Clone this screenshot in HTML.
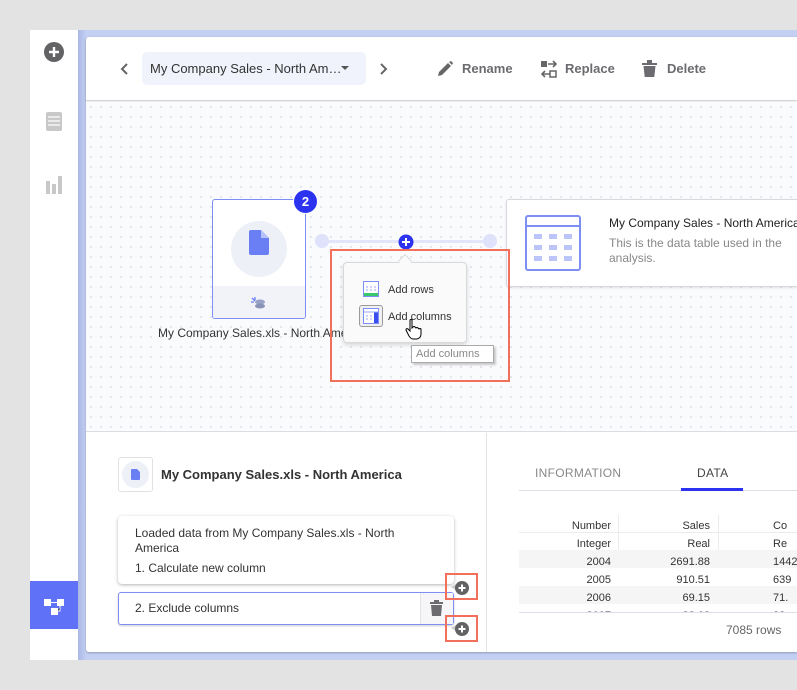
<!DOCTYPE html>
<html><head><meta charset="utf-8"><style>
*{box-sizing:border-box;margin:0;padding:0}
body{width:797px;height:690px;background:#e3e3e3;font-family:"Liberation Sans",sans-serif;position:relative;overflow:hidden;color:#333}
.a{position:absolute}
.side{left:30px;top:30px;width:48px;height:630px;background:#fff}
.frame{left:78px;top:30px;width:719px;height:630px;background:linear-gradient(90deg,#a9b8e4,#c3cff3 8px,#c3cff3)}
.card{left:86px;top:37px;width:711px;height:615px;background:#fff;border-radius:3px 0 0 3px;box-shadow:0 1px 2px rgba(0,0,0,.25)}
.hdr{left:86px;top:37px;width:711px;height:64px;border-bottom:1px solid #d4d4d8;box-shadow:0 1px 2px rgba(0,0,0,.1)}
.canvas{left:86px;top:102px;width:711px;height:330px;background-color:#fafbfd;background-image:radial-gradient(#e2e4ea 1px,transparent 1.2px);background-size:10px 10px;border-bottom:1px solid #dcdde2}
.t{font-size:13px;color:#666}
</style></head><body>
<div class="a side"></div>
<svg class="a" style="left:43px;top:41px" width="22" height="22"><circle cx="11" cy="11" r="10" fill="#636366"/><path d="M11 6v10M6 11h10" stroke="#fff" stroke-width="2.4"/></svg>
<svg class="a" style="left:46px;top:112px" width="16" height="19"><rect width="16" height="19" rx="2" fill="#c8c8c8"/><path d="M2 5h12M2 9h12M2 13h12" stroke="#fff" stroke-width="1.3"/></svg>
<svg class="a" style="left:46px;top:176px" width="16" height="18"><rect x="0" y="5" width="4" height="13" fill="#c8c8c8"/><rect x="6" y="8" width="4" height="10" fill="#c8c8c8"/><rect x="12" y="0" width="4" height="18" fill="#c8c8c8"/></svg>
<div class="a" style="left:30px;top:581px;width:48px;height:48px;background:#5f72f7"></div>
<svg class="a" style="left:43px;top:594px" width="22" height="22"><rect x="1" y="5" width="7" height="7" fill="#fff"/><rect x="14" y="5" width="7" height="7" fill="#fff"/><rect x="8" y="14" width="7" height="7" fill="#fff"/><path d="M8 8.5h6M17 12v5h-2" stroke="#fff" stroke-width="1"/></svg>
<div class="a frame"></div>
<div class="a card"></div>
<div class="a hdr"></div>
<svg class="a" style="left:120px;top:62px" width="10" height="14"><path d="M7 2L2 7l5 5" stroke="#666" stroke-width="2" fill="none"/></svg>
<div class="a" style="left:142px;top:52px;width:224px;height:33px;background:#f0f3fb;border-radius:5px"></div>
<div class="a" style="left:150px;top:61px;font-size:13px;color:#333">My Company Sales - North Am…</div>
<svg class="a" style="left:341px;top:66px" width="8" height="5"><path d="M0 0h8L4 4z" fill="#555"/></svg>
<svg class="a" style="left:378px;top:62px" width="10" height="14"><path d="M3 2l5 5-5 5" stroke="#666" stroke-width="2" fill="none"/></svg>
<svg class="a" style="left:437px;top:60px" width="18" height="17"><path d="M1 16l1-4 9-9 3 3-9 9z M12 2l2-1 2 2-1 2z" fill="#666"/></svg>
<div class="a t" style="left:462px;top:61px;font-weight:bold;color:#6b6b70">Rename</div>
<svg class="a" style="left:541px;top:60px" width="16" height="18"><rect x="0" y="1" width="6" height="6" fill="#666"/><path d="M7 4h8M12 1l3 3-3 3" stroke="#666" stroke-width="1.6" fill="none"/><rect x="9" y="11" width="6" height="6" fill="none" stroke="#666" stroke-width="1.5"/><path d="M9 14H1M4 11l-3 3 3 3" stroke="#666" stroke-width="1.6" fill="none"/></svg>
<div class="a t" style="left:565px;top:61px;font-weight:bold;color:#6b6b70">Replace</div>
<svg class="a" style="left:642px;top:60px" width="15" height="17"><path d="M0 3h15v2H0zM5 0h5v3H5zM1.5 6h12l-1.2 11h-9.6z" fill="#6b6b70"/></svg>
<div class="a t" style="left:667px;top:61px;font-weight:bold;color:#6b6b70">Delete</div>
<div class="a canvas"></div>
<!-- source node -->
<div class="a" style="left:212px;top:199px;width:94px;height:120px;background:#fff;border:1px solid #7d8ef5;border-radius:3px;overflow:hidden"><div style="position:absolute;left:0;bottom:0;width:100%;height:32px;background:#f2f3f8"></div></div>
<div class="a" style="left:231px;top:221px;width:56px;height:56px;border-radius:50%;background:#eef0f8"></div>
<svg class="a" style="left:249px;top:230px" width="20" height="25"><path d="M0 2q0-2 2-2h10l8 8v15q0 2-2 2H2q-2 0-2-2z" fill="#6b7ff5"/><path d="M12 0v8h8" fill="#b8c2fa"/></svg>
<svg class="a" style="left:250px;top:296px" width="16" height="14"><ellipse cx="10" cy="6" rx="5" ry="2.5" fill="#9aa2c8"/><ellipse cx="10" cy="10" rx="5" ry="2.5" fill="#8a92b8"/><path d="M2 2l3 3M1 6h3M5 1v3" stroke="#6b7ff5" stroke-width="1.3"/></svg>
<div class="a" style="left:293px;top:189px;width:25px;height:25px;border-radius:50%;background:#2c33f0;color:#fff;font-size:13px;font-weight:bold;text-align:center;line-height:23px;border:1px solid #fff">2</div>
<div class="a" style="left:158px;top:326px;font-size:12px;color:#333;white-space:nowrap">My Company Sales.xls - North Amer</div>
<!-- connector -->
<div class="a" style="left:322px;top:240px;width:168px;height:3px;background:#e3e6fb"></div>
<div class="a" style="left:315px;top:234px;width:14px;height:14px;border-radius:50%;background:#dfe2fb"></div>
<div class="a" style="left:483px;top:234px;width:14px;height:14px;border-radius:50%;background:#dfe2fb"></div>
<svg class="a" style="left:398px;top:234px" width="16" height="16"><circle cx="8" cy="8" r="7.5" fill="#2c33f0"/><path d="M8 4v8M4 8h8" stroke="#fff" stroke-width="2"/></svg>
<!-- target node -->
<div class="a" style="left:506px;top:199px;width:291px;height:88px;background:#fff;border:1px solid #d8d9df;border-right:none;border-radius:3px 0 0 3px;box-shadow:0 1px 2px rgba(0,0,0,.1)"></div>
<svg class="a" style="left:525px;top:215px" width="56" height="56"><rect x="1" y="1" width="54" height="54" rx="2" fill="none" stroke="#7d8ef5" stroke-width="2"/><path d="M1 11h54" stroke="#7d8ef5" stroke-width="2"/><g fill="#bcc5fa"><rect x="9" y="19" width="8" height="5"/><rect x="24" y="19" width="8" height="5"/><rect x="39" y="19" width="8" height="5"/><rect x="9" y="30" width="8" height="5"/><rect x="24" y="30" width="8" height="5"/><rect x="39" y="30" width="8" height="5"/><rect x="9" y="41" width="8" height="5"/><rect x="24" y="41" width="8" height="5"/><rect x="39" y="41" width="8" height="5"/></g></svg>
<div class="a" style="left:609px;top:216px;font-size:12px;color:#222;white-space:nowrap">My Company Sales - North America</div>
<div class="a" style="left:609px;top:236px;font-size:12px;color:#888;line-height:15px">This is the data table used in the<br>analysis.</div>
<!-- popup -->
<div class="a" style="left:343px;top:262px;width:124px;height:81px;background:#fafafa;border:1px solid #d9d9d9;border-radius:4px;box-shadow:0 2px 4px rgba(0,0,0,.15)"></div>
<div class="a" style="left:400px;top:256px;width:10px;height:10px;background:#fafafa;border-left:1px solid #d9d9d9;border-top:1px solid #d9d9d9;transform:rotate(45deg)"></div>
<svg class="a" style="left:363px;top:281px" width="16" height="16"><rect x=".5" y=".5" width="15" height="15" fill="#fff" stroke="#7d8ef5"/><rect x="1" y="12" width="14" height="3" fill="#39c96a"/><path d="M3 6h2M7 6h2M11 6h2M3 9h2M7 9h2M11 9h2" stroke="#9aa6f7"/></svg>
<div class="a" style="left:388px;top:284px;font-size:11px;color:#333">Add rows</div>
<div class="a" style="left:359px;top:305px;width:24px;height:22px;border:1px solid #9a9a9a;border-radius:3px;background:#f0f0f0"></div>
<svg class="a" style="left:363px;top:308px" width="16" height="16"><rect x=".5" y=".5" width="15" height="15" fill="#fff" stroke="#7d8ef5"/><rect x="11" y="4" width="4" height="11" fill="#3a4ef0"/><path d="M1 4h14M3 8h2M7 8h2M3 11h2M7 11h2" stroke="#9aa6f7"/></svg>
<div class="a" style="left:388px;top:311px;font-size:11px;color:#333">Add columns</div>
<div class="a" style="left:411px;top:345px;width:83px;height:18px;background:#fff;border:1px solid #aaa;box-shadow:2px 2px 2px rgba(0,0,0,.2);font-size:11px;color:#888;padding:2px 0 0 4px">Add columns</div>
<svg class="a" style="left:405px;top:318px" width="18" height="22"><path d="M5 2q1-1 2 0v8l1-1q1-1 2 0l1 1q1-1 2 0l1 1q1-1 2 0v5q0 4-4 5H8q-2 0-4-3L1 12q0-2 2-1l2 2z" fill="#fff" stroke="#000" stroke-width="1"/></svg>
<div class="a" style="left:330px;top:249px;width:180px;height:133px;border:2px solid #f26f5c"></div>
<!-- bottom left -->
<div class="a" style="left:486px;top:433px;width:1px;height:219px;background:#e3e3e6"></div>
<div class="a" style="left:118px;top:457px;width:35px;height:35px;border:1px solid #e1e1e4;border-radius:3px;background:#fff"></div>
<div class="a" style="left:122px;top:461px;width:27px;height:27px;border-radius:50%;background:#eef0f8"></div>
<svg class="a" style="left:131px;top:469px" width="9" height="11"><path d="M0 1q0-1 1-1h5l3 3v7q0 1-1 1H1q-1 0-1-1z" fill="#6b7ff5"/></svg>
<div class="a" style="left:161px;top:467px;font-size:13px;font-weight:bold;color:#333">My Company Sales.xls - North America</div>
<div class="a" style="left:118px;top:516px;width:336px;height:68px;background:#fff;border-radius:4px;box-shadow:0 1px 3px rgba(0,0,0,.3)"></div>
<div class="a" style="left:135px;top:526px;font-size:12px;color:#333;line-height:15px">Loaded data from My Company Sales.xls - North<br>America</div>
<div class="a" style="left:135px;top:561px;font-size:12px;color:#333">1. Calculate new column</div>
<div class="a" style="left:118px;top:592px;width:336px;height:33px;background:#fff;border:1px solid #7d8ef5;border-radius:3px;box-shadow:0 1px 2px rgba(0,0,0,.2)"></div>
<div class="a" style="left:420px;top:593px;width:33px;height:31px;background:#f6f6f8;border-left:1px solid #e3e3e6"></div>
<div class="a" style="left:135px;top:601px;font-size:12px;color:#333">2. Exclude columns</div>
<svg class="a" style="left:430px;top:600px" width="13" height="16"><path d="M0 2h13v2H0zM4 0h5v2H4zM1 5h11l-1 11H2z" fill="#6b6b70"/></svg>
<svg class="a" style="left:449px;top:577px" width="24" height="22"><path d="M2 10l5-3v6z" fill="#ccc"/><circle cx="13" cy="11" r="7" fill="#636366"/><path d="M13 7.5v7M9.5 11h7" stroke="#fff" stroke-width="2"/></svg>
<svg class="a" style="left:449px;top:619px" width="24" height="22"><path d="M2 9l5-3v6z" fill="#ccc"/><circle cx="13" cy="10" r="7" fill="#636366"/><path d="M13 6.5v7M9.5 10h7" stroke="#fff" stroke-width="2"/></svg>
<div class="a" style="left:445px;top:573px;width:33px;height:27px;border:2px solid #f26f5c"></div>
<div class="a" style="left:445px;top:615px;width:33px;height:27px;border:2px solid #f26f5c"></div>
<!-- bottom right -->
<div class="a" style="left:535px;top:466px;font-size:12px;color:#888;letter-spacing:.3px">INFORMATION</div>
<div class="a" style="left:697px;top:466px;font-size:12px;color:#444;letter-spacing:.3px">DATA</div>
<div class="a" style="left:519px;top:490px;width:278px;height:1px;background:#dedee6"></div>
<div class="a" style="left:681px;top:488px;width:62px;height:3px;background:#2c33f0"></div>
<div class="a" style="left:519px;top:550px;width:278px;height:18px;background:#f5f5f5"></div>
<div class="a" style="left:519px;top:586px;width:278px;height:18px;background:#f5f5f5"></div>
<div class="a" style="left:519px;top:532px;width:278px;height:1px;background:#ececec"></div>
<div class="a" style="left:618px;top:515px;width:1px;height:35px;background:#ececec"></div>
<div class="a" style="left:718px;top:515px;width:1px;height:35px;background:#ececec"></div>
<div class="a" style="left:519px;top:612px;width:278px;height:1px;background:#dedee6"></div>
<div class="a" style="left:519px;top:515px;width:278px;height:97px;overflow:hidden;font-size:11px;color:#333">
<div style="position:absolute;right:186px;top:2px;text-align:right;line-height:18px">Number<br>Integer<br>2004<br>2005<br>2006<br>2007</div>
<div style="position:absolute;right:87px;top:2px;text-align:right;line-height:18px">Sales<br>Real<br>2691.88<br>910.51<br>69.15<br>22.62</div>
<div style="position:absolute;left:254px;top:2px;line-height:18px">Co<br>Re<br>1442<br>639<br>71.<br>22</div>
</div>
<div class="a" style="left:726px;top:623px;font-size:12px;color:#666">7085 rows</div>
</body></html>
